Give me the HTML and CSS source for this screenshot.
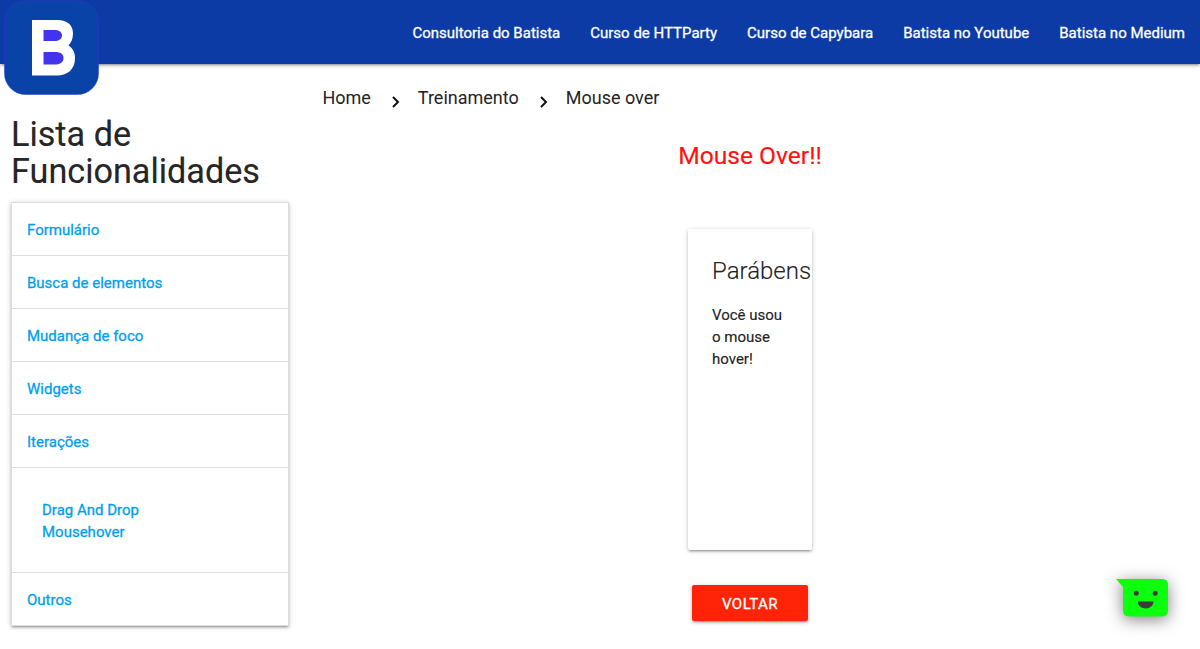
FILE: index.html
```html
<!DOCTYPE html>
<html lang="pt-BR">
<head>
<meta charset="utf-8">
<title>Mouse over</title>
<link rel="stylesheet" href="styles.css">
</head>
<body>
<header class="navbar">
  <a class="logo" aria-label="Batista">
    <svg width="96" height="96" viewBox="0 0 96 96">
      <rect x=".5" y=".5" width="94" height="94" rx="21" fill="#0a43a8" stroke="#3030d4" stroke-width=".5"/>
      <path fill="#fff" fill-rule="evenodd" d="M28 20H53C64 20 69 25.500 69 33.500C69 39 67 43 64.500 45.500C68.500 48 71 52 71 58C71 69 64 75.500 53 75.500H28Z"/>
      <path fill="#4332ee" d="M39.500 30H50C55 30 58 32 58 35.500S55 41 50 41H39.500ZM39.500 52H51C56.500 52 59.500 54 59.500 58S56.500 64.500 51 64.500H39.500Z"/>
    </svg>
  </a>
  <nav class="nav-links">
    <a>Consultoria do Batista</a>
    <a>Curso de HTTParty</a>
    <a>Curso de Capybara</a>
    <a>Batista no Youtube</a>
    <a>Batista no Medium</a>
  </nav>
</header>
<div class="layout">
  <aside class="sidebar">
    <h4 class="sidebar-title">Lista de Funcionalidades</h4>
    <ul class="menu">
      <li><a class="menu-item">Formulário</a></li>
      <li><a class="menu-item">Busca de elementos</a></li>
      <li><a class="menu-item">Mudança de foco</a></li>
      <li><a class="menu-item">Widgets</a></li>
      <li><a class="menu-item">Iterações</a>
        <div class="submenu"><a>Drag And Drop</a><a>Mousehover</a></div>
      </li>
      <li><a class="menu-item">Outros</a></li>
    </ul>
  </aside>
  <main class="content">
    <div class="breadcrumbs">
      <a>Home</a>
      <svg class="chevron" width="8" height="12" viewBox="0 0 8 12"><path d="M1 1L6 6L1 11"/></svg>
      <a>Treinamento</a>
      <svg class="chevron" width="8" height="12" viewBox="0 0 8 12"><path d="M1 1L6 6L1 11"/></svg>
      <a>Mouse over</a>
    </div>
    <h5 class="page-title">Mouse Over!!</h5>
    <section class="card">
      <span class="card-title">Parábens</span>
      <p class="card-text">Você usou o mouse hover!</p>
    </section>
    <a class="btn">Voltar</a>
  </main>
</div>
<div class="chat" role="button" aria-label="Chat">
  <svg width="52" height="38" viewBox="0 0 52 38">
    <path fill="#0cff0c" d="M0 0H46Q52 0 52 6V31Q52 37.500 46 37.500H13Q7 37.500 7 31V8Z"/>
    <circle cx="20.300" cy="14.300" r="2.500" fill="#3c3c3c"/>
    <circle cx="39.200" cy="14.300" r="2.500" fill="#3c3c3c"/>
    <path fill="#3c3c3c" d="M21.800 22.500H37.500C37.500 26.500 34 29.500 29.700 29.500S21.800 26.500 21.800 22.500Z"/>
  </svg>
</div>
</body>
</html>
```
FILE: styles.css
```css
* { box-sizing: border-box; }
body {
  margin: 0;
  height: 649px;
  overflow: hidden;
  background: #fff;
  color: rgba(0, 0, 0, .87);
  font: 400 15px/22px Roboto, "Liberation Sans", sans-serif;
}
h4, h5, p, ul { margin: 0; padding: 0; font-weight: 400; }
ul { list-style: none; }
.navbar {
  position: relative;
  display: flex;
  justify-content: flex-end;
  height: 64px;
  background: #0d3ba6;
  box-shadow: 0 2px 2px 0 rgba(0,0,0,.14), 0 3px 1px -2px rgba(0,0,0,.12), 0 1px 5px 0 rgba(0,0,0,.2);
}
.logo { position: absolute; left: 4px; top: 0; height: 96px; }
.nav-links { display: flex; }
.nav-links a { padding: 0 15px; line-height: 66px; color: #fff; -webkit-text-stroke: .3px; }
.layout { display: grid; grid-template-columns: 300px 900px; }
.sidebar { padding: 52px 11px 0; }
.sidebar-title { font-size: 34.200px; line-height: 37px; -webkit-text-stroke: .2px; }
.menu {
  margin-top: 12px;
  border: 1px solid #ddd;
  border-bottom: 0;
  box-shadow: 0 2px 2px 0 rgba(0,0,0,.14), 0 3px 1px -2px rgba(0,0,0,.12), 0 1px 5px 0 rgba(0,0,0,.2);
}
.menu-item { display: block; padding: 16px 15px 14px; border-bottom: 1px solid #ddd; }
.menu a { color: #009fee; -webkit-text-stroke: .3px; }
.submenu { display: flex; flex-direction: column; padding: 31px 30px 29px; border-bottom: 1px solid #ddd; }
.content { display: flex; flex-direction: column; align-items: center; }
.breadcrumbs { display: flex; align-self: flex-start; align-items: center; padding: 23px 0 0 22.400px; font-size: 18px; -webkit-text-stroke: .1px; }
.chevron { margin: 8px 18px 0 21px; fill: none; stroke: #111; stroke-width: 2; }
.page-title { margin-top: 33px; color: #f11; font-size: 24.600px; line-height: 27px; -webkit-text-stroke: .15px; }
.card {
  width: 124px;
  height: 321px;
  margin-top: 60px;
  padding: 24px;
  border-radius: 2px;
  box-shadow: 0 2px 2px 0 rgba(0,0,0,.14), 0 3px 1px -2px rgba(0,0,0,.12), 0 1px 5px 0 rgba(0,0,0,.2);
}
.card-title { display: block; margin-bottom: 15px; font-size: 24px; line-height: 36px; font-weight: 300; -webkit-text-stroke: .2px; }
.card-text { -webkit-text-stroke: .2px; }
.btn {
  margin-top: 35px;
  width: 116px;
  height: 36px;
  border-radius: 2px;
  background: #ff2407;
  color: #fff;
  line-height: 38px;
  text-align: center;
  text-transform: uppercase;
  letter-spacing: .5px;
  -webkit-text-stroke: .3px;
  box-shadow: 0 2px 2px 0 rgba(0,0,0,.14), 0 3px 1px -2px rgba(0,0,0,.12), 0 1px 5px 0 rgba(0,0,0,.2);
}
.chat { position: fixed; left: 1116px; top: 579px; height: 38px; }
.chat svg { display: block; overflow: visible; filter: drop-shadow(0 3px 8px rgba(0,0,0,.5)); }
```
